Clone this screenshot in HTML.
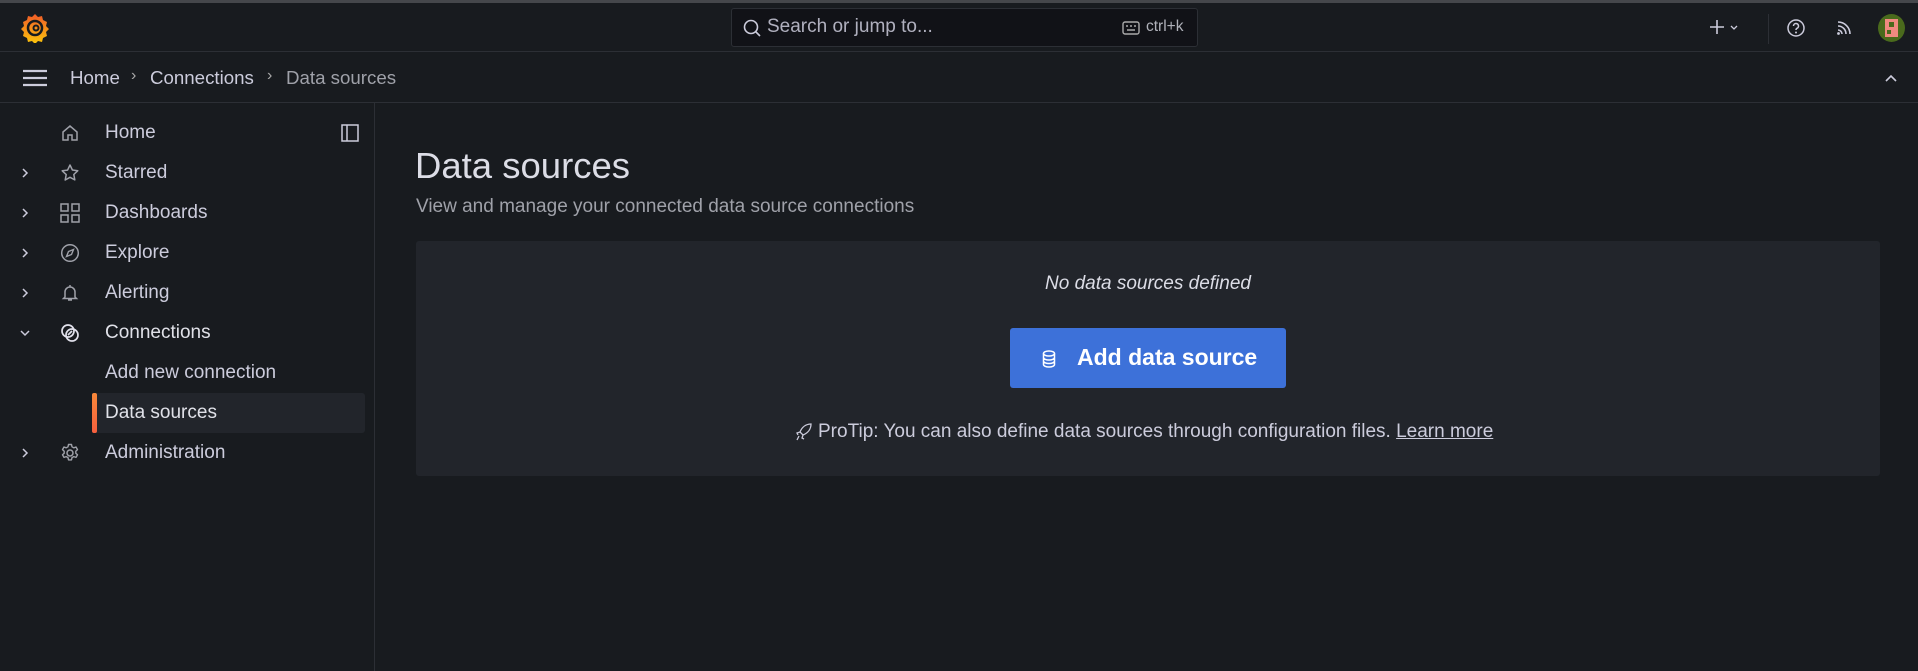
<!DOCTYPE html>
<html><head><meta charset="utf-8"><style>
*{box-sizing:border-box;margin:0;padding:0}
body{width:1918px;height:671px;background:#181b1f;font-family:"Liberation Sans",sans-serif;color:#ccccdc;position:relative;overflow:hidden;font-size:19px}
.abs{position:absolute}
.topline{left:0;top:0;width:1918px;height:3px;background:#45474b}
.hdr{left:0;top:3px;width:1918px;height:49px;border-bottom:1px solid #2c2f35}
.bc{left:0;top:52px;width:1918px;height:51px;border-bottom:1px solid #2c2f35}
.side{left:0;top:103px;width:375px;height:568px;border-right:1px solid #2c2f35}
.search{left:731px;top:8px;width:467px;height:39px;background:#111217;border:1px solid #2c2f35;border-radius:3px}
.nav{position:absolute;left:105px;font-size:19px;color:#ccccdc;line-height:20px}
.ico{position:absolute;left:60px;width:20px;height:20px}
.chev{position:absolute;left:19px;width:12px;height:12px}
svg{display:block}
</style></head><body>
<div class="abs topline"></div>
<div class="abs hdr"></div>
<svg class="abs" style="left:20px;top:12px" width="30" height="31" viewBox="0 0 30 31"><defs><linearGradient id="g" x1="0" y1="1" x2="0" y2="0"><stop offset="0" stop-color="#fcc70b"/><stop offset="1" stop-color="#f05a28"/></linearGradient></defs><path d="M15 2l3 3 4-1 1 4 4 2-1 4 3 3-3 3 1 4-4 2-1 4-4-1-3 3-3-3-4 1-1-4-4-2 1-4-3-3 3-3-1-4 4-2 1-4 4 1z" fill="url(#g)"/><circle cx="15" cy="16" r="7" fill="none" stroke="#181b1f" stroke-width="2.5"/><circle cx="16" cy="16" r="2.5" fill="none" stroke="#181b1f" stroke-width="2"/></svg>
<div class="abs search"></div>
<svg class="abs" style="left:742px;top:18px" width="20" height="20" viewBox="0 0 20 20"><circle cx="9" cy="9" r="6.5" fill="none" stroke="#ccccdc" stroke-width="1.6"/><path d="M14 14l4 4" stroke="#ccccdc" stroke-width="1.6"/></svg>
<div class="abs" style="left:767px;top:16px;font-size:19px;color:#ccccdc;opacity:.85">Search or jump to...</div>
<svg class="abs" style="left:1122px;top:21px" width="18" height="14" viewBox="0 0 18 14"><rect x="1" y="1" width="16" height="12" rx="2" fill="none" stroke="#aaa" stroke-width="1.4"/><path d="M4 5h2M8 5h2M12 5h2M5 9h8" stroke="#aaa" stroke-width="1.4"/></svg>
<div class="abs" style="left:1146px;top:18px;font-size:15.5px;color:#b0b2ba">ctrl+k</div>
<svg class="abs" style="left:1708px;top:18px" width="36" height="18" viewBox="0 0 36 18"><path d="M9 2v14M2 9h14" stroke="#ccccdc" stroke-width="1.6"/><path d="M23 8l3 3 3-3" fill="none" stroke="#ccccdc" stroke-width="1.3"/></svg>
<div class="abs" style="left:1768px;top:14px;width:1px;height:30px;background:#2c2f35"></div>
<svg class="abs" style="left:1786px;top:18px" width="20" height="20" viewBox="0 0 20 20"><circle cx="10" cy="10" r="8" fill="none" stroke="#ccccdc" stroke-width="1.5"/><path d="M7.5 8a2.5 2.5 0 1 1 3.5 2.3c-.8.4-1 .9-1 1.7" fill="none" stroke="#ccccdc" stroke-width="1.5"/><circle cx="10" cy="14.5" r="1" fill="#ccccdc"/></svg>
<svg class="abs" style="left:1835px;top:19px" width="18" height="18" viewBox="0 0 18 18"><path d="M3 3a12 12 0 0 1 12 12M3 7a8 8 0 0 1 8 8M3 11a4 4 0 0 1 4 4" fill="none" stroke="#ccccdc" stroke-width="1.6"/><circle cx="3.5" cy="14.5" r="1.4" fill="#ccccdc"/></svg>
<div class="abs" style="left:1878px;top:14px;width:27px;height:28px;border-radius:50%;background:#4a6a1c;overflow:hidden"><div style="position:absolute;left:7px;top:5px;width:13px;height:18px;background:#f08a80"></div><div style="position:absolute;left:11px;top:8px;width:5px;height:5px;background:#4a6a1c"></div><div style="position:absolute;left:9px;top:16px;width:4px;height:4px;background:#4a6a1c"></div></div>

<div class="abs bc"></div>
<svg class="abs" style="left:22px;top:69px" width="26" height="18" viewBox="0 0 26 18"><path d="M1 2h24M1 9h24M1 16h24" stroke="#ccccdc" stroke-width="2.2"/></svg>
<div class="abs" style="left:70px;top:67px;font-size:18.7px;color:#ccccdc">Home</div>
<div class="abs" style="left:131px;top:67px;font-size:16px;color:#aaa">›</div>
<div class="abs" style="left:150px;top:67px;font-size:18.7px;color:#ccccdc">Connections</div>
<div class="abs" style="left:267px;top:67px;font-size:16px;color:#aaa">›</div>
<div class="abs" style="left:286px;top:67px;font-size:18.7px;color:#9fa1a9">Data sources</div>
<svg class="abs" style="left:1884px;top:73px" width="14" height="10" viewBox="0 0 14 10"><path d="M2 8l5-5 5 5" fill="none" stroke="#ccccdc" stroke-width="1.6"/></svg>

<div class="abs side"></div>
<svg class="abs" style="left:341px;top:124px" width="18" height="18" viewBox="0 0 18 18"><rect x="1" y="1" width="16" height="16" fill="none" stroke="#ccccdc" stroke-width="1.5"/><path d="M6 1v16" stroke="#ccccdc" stroke-width="1.5"/></svg>

<svg class="ico" style="top:123px" viewBox="0 0 20 20"><path d="M3 9l7-6 7 6v8H12v-5H8v5H3z" fill="none" stroke="#9fa1a9" stroke-width="1.5"/></svg>
<div class="nav" style="top:123px">Home</div>

<svg class="chev" style="top:167px" viewBox="0 0 12 12"><path d="M4 2l4 4-4 4" fill="none" stroke="#ccccdc" stroke-width="1.5"/></svg>
<svg class="ico" style="top:163px" viewBox="0 0 20 20"><path d="M10 2l2.4 5 5.4.7-4 3.8 1 5.4L10 14.3 5.2 17l1-5.4-4-3.8 5.4-.7z" fill="none" stroke="#9fa1a9" stroke-width="1.5" stroke-linejoin="round"/></svg>
<div class="nav" style="top:163px">Starred</div>

<svg class="chev" style="top:207px" viewBox="0 0 12 12"><path d="M4 2l4 4-4 4" fill="none" stroke="#ccccdc" stroke-width="1.5"/></svg>
<svg class="ico" style="top:203px" viewBox="0 0 20 20"><g fill="none" stroke="#9fa1a9" stroke-width="1.5"><rect x="1" y="1" width="7" height="7"/><rect x="12" y="1" width="7" height="7"/><rect x="1" y="12" width="7" height="7"/><rect x="12" y="12" width="7" height="7"/></g></svg>
<div class="nav" style="top:203px">Dashboards</div>

<svg class="chev" style="top:247px" viewBox="0 0 12 12"><path d="M4 2l4 4-4 4" fill="none" stroke="#ccccdc" stroke-width="1.5"/></svg>
<svg class="ico" style="top:243px" viewBox="0 0 20 20"><circle cx="10" cy="10" r="8.3" fill="none" stroke="#9fa1a9" stroke-width="1.5"/><path d="M13.5 6.5l-2 5-5 2 2-5z" fill="none" stroke="#9fa1a9" stroke-width="1.4"/></svg>
<div class="nav" style="top:243px">Explore</div>

<svg class="chev" style="top:287px" viewBox="0 0 12 12"><path d="M4 2l4 4-4 4" fill="none" stroke="#ccccdc" stroke-width="1.5"/></svg>
<svg class="ico" style="top:283px" viewBox="0 0 20 20"><path d="M5 14V9a5 5 0 0 1 10 0v5l1.5 1.5h-13z M8 17h4 M10 2v2" fill="none" stroke="#9fa1a9" stroke-width="1.5"/></svg>
<div class="nav" style="top:283px">Alerting</div>

<svg class="chev" style="top:327px" viewBox="0 0 12 12"><path d="M2 4l4 4 4-4" fill="none" stroke="#ccccdc" stroke-width="1.5"/></svg>
<svg class="ico" style="top:323px" viewBox="0 0 20 20"><g fill="none" stroke="#e0e0ea" stroke-width="1.7"><circle cx="8" cy="8" r="6"/><circle cx="12" cy="12" r="6"/><path d="M8 12l4-4"/></g></svg>
<div class="nav" style="top:323px;color:#e0e1e8">Connections</div>

<div class="nav" style="top:363px">Add new connection</div>
<div class="abs" style="left:92px;top:393px;width:273px;height:40px;background:#22252b;border-radius:3px"></div>
<div class="abs" style="left:92px;top:393px;width:5px;height:40px;border-radius:2px;background:linear-gradient(#f9893a,#f55f3e)"></div>
<div class="nav" style="top:403px;color:#e0e1e8">Data sources</div>

<svg class="chev" style="top:447px" viewBox="0 0 12 12"><path d="M4 2l4 4-4 4" fill="none" stroke="#ccccdc" stroke-width="1.5"/></svg>
<svg class="ico" style="top:443px" viewBox="0 0 20 20"><circle cx="10" cy="10" r="3" fill="none" stroke="#9fa1a9" stroke-width="1.5"/><path d="M8.5 1.5h3l.5 2.3 1.8 1 2.2-.8 1.5 2.6-1.7 1.6v2l1.7 1.6-1.5 2.6-2.2-.8-1.8 1-.5 2.3h-3l-.5-2.3-1.8-1-2.2.8-1.5-2.6 1.7-1.6v-2L2.5 6.6 4 4l2.2.8 1.8-1z" fill="none" stroke="#9fa1a9" stroke-width="1.4" stroke-linejoin="round"/></svg>
<div class="nav" style="top:443px">Administration</div>

<div class="abs" style="left:415px;top:146px;font-size:36.5px;color:#dcdde6;line-height:40px">Data sources</div>
<div class="abs" style="left:416px;top:196px;font-size:19px;color:#9fa1a9">View and manage your connected data source connections</div>
<div class="abs" style="left:416px;top:241px;width:1464px;height:235px;background:#22252b;border-radius:3px"></div>
<div class="abs" style="left:416px;top:273px;width:1464px;text-align:center;font-style:italic;font-size:19px;color:#dcdde6">No data sources defined</div>
<div class="abs" style="left:1010px;top:328px;width:276px;height:60px;background:#3d71d9;border-radius:3px"></div>
<svg class="abs" style="left:1042px;top:350px" width="14" height="18" viewBox="0 0 14 18"><g fill="none" stroke="#fff" stroke-width="1.5"><ellipse cx="7" cy="3.5" rx="5.5" ry="2.5"/><path d="M1.5 3.5v11c0 1.4 2.5 2.5 5.5 2.5s5.5-1.1 5.5-2.5v-11M1.5 7.5c0 1.4 2.5 2.5 5.5 2.5s5.5-1.1 5.5-2.5M1.5 11c0 1.4 2.5 2.5 5.5 2.5s5.5-1.1 5.5-2.5"/></g></svg>
<div class="abs" style="left:1077px;top:344px;font-size:23px;font-weight:bold;color:#fff">Add data source</div>
<svg class="abs" style="left:795px;top:422px" width="18" height="20" viewBox="0 0 18 20"><path d="M16 2c-5 0-9 3-11 8l3 3c5-2 8-6 8-11zM5 10l-3 1 1 2M8 13l-1 3 2 1M4 14l-2 4" fill="none" stroke="#ccccdc" stroke-width="1.3"/></svg>
<div class="abs" style="left:818px;top:421px;font-size:19px;color:#ccccdc;white-space:nowrap">ProTip: You can also define data sources through configuration files. <span style="text-decoration:underline">Learn more</span></div>
</body></html>
